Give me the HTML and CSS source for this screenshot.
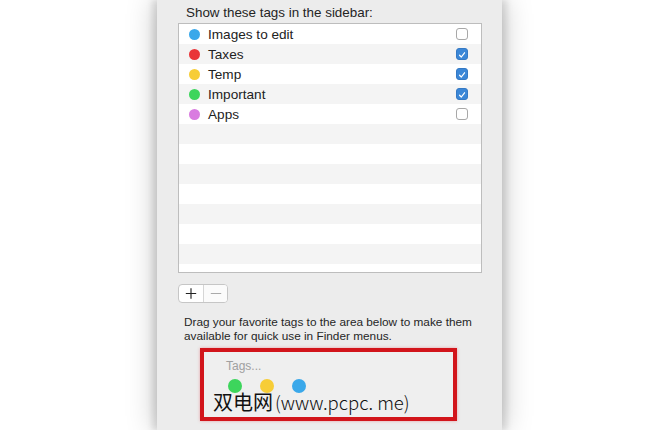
FILE: index.html
```html
<!DOCTYPE html>
<html>
<head>
<meta charset="utf-8">
<link rel="stylesheet" href="styles.css">
</head>
<body>
<div class="stage">
  <div class="panel">
    <div class="heading">Show these tags in the sidebar:</div>
    <div class="list">
      <div class="row"><span class="dot blue"></span><span class="name">Images to edit</span><span class="cb"></span></div>
      <div class="row"><span class="dot red"></span><span class="name">Taxes</span><span class="cb on"><svg viewBox="0 0 13 13"><path d="M3.3 6.8 L5.6 9.1 L9.8 3.6" fill="none" stroke="#fff" stroke-width="1.6" stroke-linecap="round" stroke-linejoin="round"/></svg></span></div>
      <div class="row"><span class="dot yellow"></span><span class="name">Temp</span><span class="cb on"><svg viewBox="0 0 13 13"><path d="M3.3 6.8 L5.6 9.1 L9.8 3.6" fill="none" stroke="#fff" stroke-width="1.6" stroke-linecap="round" stroke-linejoin="round"/></svg></span></div>
      <div class="row"><span class="dot green"></span><span class="name">Important</span><span class="cb on"><svg viewBox="0 0 13 13"><path d="M3.3 6.8 L5.6 9.1 L9.8 3.6" fill="none" stroke="#fff" stroke-width="1.6" stroke-linecap="round" stroke-linejoin="round"/></svg></span></div>
      <div class="row"><span class="dot purple"></span><span class="name">Apps</span><span class="cb"></span></div>
      <div class="row"></div>
      <div class="row"></div>
      <div class="row"></div>
      <div class="row"></div>
      <div class="row"></div>
      <div class="row"></div>
      <div class="row"></div>
      <div class="row"></div>
    </div>
    <div class="buttons">
      <span class="btn plus"><svg viewBox="0 0 24 18"><path d="M12 3.5 V14.5 M6.5 9 H17.5" stroke="#222" stroke-width="1.2"/></svg></span>
      <span class="btn minus"><svg viewBox="0 0 24 18"><path d="M6.5 9 H17.5" stroke="#aaa" stroke-width="1.2"/></svg></span>
    </div>
    <p class="help">Drag your favorite tags to the area below to make them available for quick use in Finder menus.</p>
    <div class="favs">
      <div class="tags-label">Tags...</div>
      <div class="fav-dots">
        <span class="bigdot green"></span>
        <span class="bigdot yellow"></span>
        <span class="bigdot blue"></span>
      </div>
      <div class="mark">双电网<span class="mark-url">(www.pcpc. me)</span></div>
    </div>
  </div>
</div>
</body>
</html>
```

FILE: styles.css
```css
html, body {
  margin: 0;
  padding: 0;
  background: #ffffff;
}
body {
  width: 670px;
  height: 430px;
  overflow: hidden;
  font-family: "Liberation Sans", Arial, sans-serif;
  color: #222;
}
.stage {
  display: flex;
  padding-left: 157px;
}
.panel {
  width: 345px;
  height: 430px;
  background: #ececec;
  box-shadow: -5px 0 6px rgba(0,0,0,0.10), 5px 0 6px rgba(0,0,0,0.10), 0 0 28px rgba(0,0,0,0.25);
  box-sizing: border-box;
  padding: 5px 20px 0 21px;
  display: flex;
  flex-direction: column;
}
.heading {
  font-size: 13.4px;
  line-height: 16px;
  padding-left: 8px;
  height: 18px;
  color: #242424;
}
.list {
  height: 250px;
  border: 1px solid #bdbdbd;
  background: #fff;
  box-sizing: border-box;
  overflow: hidden;
  flex-shrink: 0;
}
.row {
  height: 20px;
  display: flex;
  align-items: center;
  padding-left: 10px;
  padding-right: 13px;
}
.row:nth-child(even) {
  background: #f4f4f4;
}
.dot {
  width: 11px;
  height: 11px;
  border-radius: 50%;
  margin-right: 8px;
}
.name {
  flex: 1;
  font-size: 13.6px;
  color: #222;
}
.blue { background: #3aa8ea; }
.red { background: #e93538; }
.yellow { background: #f7cd37; }
.green { background: #3dd55c; }
.purple { background: #d97be0; }
.cb {
  width: 12px;
  height: 12px;
  border: 1px solid #a8a8a8;
  border-radius: 3px;
  background: #fff;
  box-sizing: border-box;
  display: flex;
}
.cb.on {
  background: #3b87d7;
  border-color: #3579c4;
}
.cb svg {
  width: 12px;
  height: 12px;
}
.buttons {
  margin-top: 11px;
  display: flex;
  width: 50px;
  height: 19px;
  border: 1px solid #c6c6c6;
  border-radius: 4px;
  background: #fff;
  box-sizing: border-box;
  overflow: hidden;
  flex-shrink: 0;
}
.btn {
  flex: 1;
  display: flex;
  align-items: center;
  justify-content: center;
}
.btn svg {
  width: 24px;
  height: 17px;
}
.plus {
  border-right: 1px solid #d6d6d6;
}
.minus {
  background: #fbfbfb;
}
.help {
  margin: 12px 0 0 6px;
  font-size: 11.8px;
  line-height: 14px;
  color: #262626;
  width: 310px;
}
.favs {
  margin: 5px 0 0 22px;
  width: 257px;
  height: 73px;
  border: 4px solid #d2151b;
  box-sizing: border-box;
  background: #efefef;
  padding: 7px 0 0 22px;
  box-shadow: 0 0 3px rgba(220,30,40,0.35);
  flex-shrink: 0;
}
.tags-label {
  font-size: 12px;
  line-height: 14px;
  color: #a0a0a0;
}
.fav-dots {
  display: flex;
  gap: 18px;
  margin-top: 6px;
  padding-left: 2px;
}
.bigdot {
  width: 14px;
  height: 14px;
  border-radius: 50%;
}
.mark {
  margin: -2px 0 0 -13px;
  font-family: "Noto Sans CJK SC", sans-serif;
  font-size: 20px;
  line-height: 22px;
  color: #111;
  white-space: nowrap;
}
.mark-url {
  font-size: 18.5px;
  margin-left: 2px;
  font-weight: 300;
}
```
